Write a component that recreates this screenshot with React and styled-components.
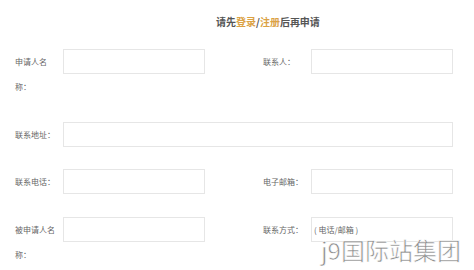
import React from 'react';
import styled, { createGlobalStyle } from 'styled-components';

const GlobalStyle = createGlobalStyle`
  html, body {
    margin: 0;
    padding: 0;
    background: #ffffff;
  }
  body {
    font-family: "Noto Sans CJK SC", "Liberation Sans", sans-serif;
  }
`;

const Page = styled.div`
  position: relative;
  width: 474px;
  height: 270px;
  overflow: hidden;
  background: #fff;
`;

const Title = styled.h3`
  margin: 0;
  padding: 15px 0 0 216px;
  height: 34px;
  box-sizing: border-box;
  font-size: 10px;
  line-height: 14px;
  font-weight: bold;
  color: #555;
  white-space: nowrap;
`;

const Link = styled.span`
  color: #dba245;
`;

const Form = styled.div`
  padding: 15px 21px 0 15px;
`;

const Row = styled.div`
  display: flex;
  align-items: flex-start;
  margin-bottom: 22.5px;
`;

const Field = styled.div`
  display: flex;
  align-items: flex-start;
  width: ${(p) => (p.$wide ? '438px' : '248px')};
  flex: ${(p) => (p.$wide ? '1' : 'none')};
  &:last-child {
    width: auto;
    flex: 1;
  }
`;

const Label = styled.label`
  width: 40px;
  margin-right: 8px;
  flex: none;
  font-size: 8px;
  line-height: 25px;
  color: #666;
  word-break: break-all;
`;

const Input = styled.input`
  box-sizing: border-box;
  width: ${(p) => (p.$wide ? '390px' : '142px')};
  height: 25px;
  border: 1px solid #e6e6e6;
  padding: 0 2px;
  font-family: "Noto Sans CJK SC", sans-serif;
  font-size: 8px;
  color: #333;
  outline: none;
  &::placeholder {
    color: #666;
  }
`;

const Watermark = styled.div`
  position: absolute;
  left: 321px;
  top: 232px;
  font-family: "Noto Sans CJK SC", sans-serif;
  font-size: 24px;
  font-weight: 400;
  line-height: 36px;
  color: #8c8c8c;
  -webkit-text-stroke: 0.6px #fff;
  white-space: nowrap;
  pointer-events: none;
`;

export default function App() {
  return (
    <Page>
      <GlobalStyle />
      <Title>
        请先<Link>登录</Link>/<Link>注册</Link>后再申请
      </Title>
      <Form>
        <Row>
          <Field>
            <Label>申请人名称：</Label>
            <Input />
          </Field>
          <Field>
            <Label>联系人：</Label>
            <Input />
          </Field>
        </Row>
        <Row>
          <Field $wide>
            <Label>联系地址：</Label>
            <Input $wide />
          </Field>
        </Row>
        <Row>
          <Field>
            <Label>联系电话：</Label>
            <Input />
          </Field>
          <Field>
            <Label>电子邮箱：</Label>
            <Input />
          </Field>
        </Row>
        <Row>
          <Field>
            <Label>被申请人名称：</Label>
            <Input />
          </Field>
          <Field>
            <Label>联系方式：</Label>
            <Input placeholder="( 电话/邮箱 )" />
          </Field>
        </Row>
      </Form>
      <Watermark>j9国际站集团</Watermark>
    </Page>
  );
}
